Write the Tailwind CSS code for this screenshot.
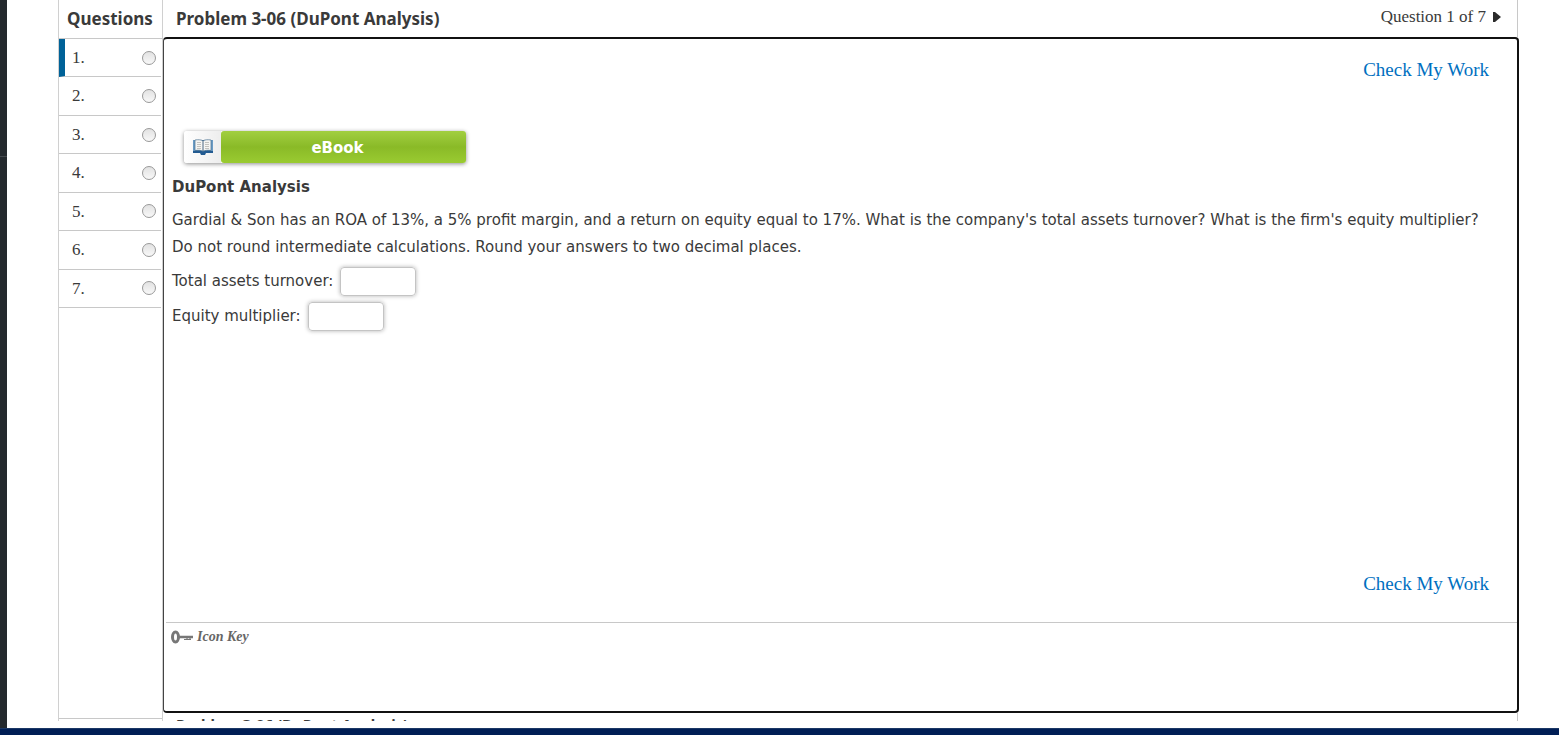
<!DOCTYPE html>
<html lang="en">
<head>
  <meta charset="UTF-8" />
  <meta name="viewport" content="width=device-width, initial-scale=1.0" />
  <title>Problem 3-06 (DuPont Analysis)</title>
  <script src="https://cdn.jsdelivr.net/npm/@tailwindcss/browser@4"></script>
</head>
<body class="flex h-screen flex-col overflow-hidden bg-white font-['Liberation_Serif',serif] text-[#3a3a3a]">
  <div class="flex min-h-0 flex-1">
    <!-- Collapsed side rail -->
    <aside class="w-[7px] bg-[#24292d] pt-[156px]">
      <div class="h-px bg-[#44494d]"></div>
    </aside>

    <main class="flex min-w-0 flex-1 pr-10 pb-[7px] pl-[51px]">
      <!-- Question list -->
      <nav class="flex w-[105px] flex-col border-x border-[#d0d0d0]">
        <h2 class="h-[39px] border-b border-[#c8c8c8] pl-2 font-['Noto_Sans',sans-serif] text-[17px] leading-[38px] font-bold">Questions</h2>
        <ol class="mr-px grid h-[269px] grid-rows-7 text-[17px]">
          <li class="flex items-center justify-between border-b border-l-6 border-b-[#c8c8c8] border-l-[#006298] pr-[5px] pl-[7px]">
            <label for="q1">1.</label>
            <input id="q1" name="question" type="radio" class="size-3.5 appearance-none rounded-full border border-[#999] bg-linear-to-b from-[#e2e2e2] to-[#f8f8f8]" />
          </li>
          <li class="flex items-center justify-between border-b border-[#c8c8c8] pr-[5px] pl-[13px]">
            <label for="q2">2.</label>
            <input id="q2" name="question" type="radio" class="size-3.5 appearance-none rounded-full border border-[#999] bg-linear-to-b from-[#e2e2e2] to-[#f8f8f8]" />
          </li>
          <li class="flex items-center justify-between border-b border-[#c8c8c8] pr-[5px] pl-[13px]">
            <label for="q3">3.</label>
            <input id="q3" name="question" type="radio" class="size-3.5 appearance-none rounded-full border border-[#999] bg-linear-to-b from-[#e2e2e2] to-[#f8f8f8]" />
          </li>
          <li class="flex items-center justify-between border-b border-[#c8c8c8] pr-[5px] pl-[13px]">
            <label for="q4">4.</label>
            <input id="q4" name="question" type="radio" class="size-3.5 appearance-none rounded-full border border-[#999] bg-linear-to-b from-[#e2e2e2] to-[#f8f8f8]" />
          </li>
          <li class="flex items-center justify-between border-b border-[#c8c8c8] pr-[5px] pl-[13px]">
            <label for="q5">5.</label>
            <input id="q5" name="question" type="radio" class="size-3.5 appearance-none rounded-full border border-[#999] bg-linear-to-b from-[#e2e2e2] to-[#f8f8f8]" />
          </li>
          <li class="flex items-center justify-between border-b border-[#c8c8c8] pr-[5px] pl-[13px]">
            <label for="q6">6.</label>
            <input id="q6" name="question" type="radio" class="size-3.5 appearance-none rounded-full border border-[#999] bg-linear-to-b from-[#e2e2e2] to-[#f8f8f8]" />
          </li>
          <li class="flex items-center justify-between border-b border-[#c8c8c8] pr-[5px] pl-[13px]">
            <label for="q7">7.</label>
            <input id="q7" name="question" type="radio" class="size-3.5 appearance-none rounded-full border border-[#999] bg-linear-to-b from-[#e2e2e2] to-[#f8f8f8]" />
          </li>
        </ol>
        <div class="mt-auto mb-0.5 border-b border-[#c8c8c8]"></div>
      </nav>

      <section class="flex min-w-0 flex-1 flex-col">
        <header class="mr-px flex h-[37px] justify-between border-r border-[#c8c8c8] pr-4 pl-[13px]">
          <h1 class="font-['Noto_Sans',sans-serif] text-[17px] leading-[38px] font-bold">Problem 3-06 (DuPont Analysis)</h1>
          <button class="flex items-center gap-[7px] pb-1 text-[17px]">
            Question 1 of 7
            <svg class="h-2.5 w-2" viewBox="0 0 8 10" fill="#2b2b2b"><path d="M0 0h2l6 5-6 5H0z" /></svg>
          </button>
        </header>

        <!-- Problem frame -->
        <div class="flex min-h-0 flex-1 flex-col rounded-[4px] border-2 border-l border-[#111] border-l-[#444]">
          <div class="flex flex-1 flex-col pr-4 pl-2 font-['DejaVu_Sans',sans-serif] text-[15px]">
            <a href="#" class="mt-[19px] mr-3 self-end font-['Liberation_Serif',serif] text-[19px] leading-6 text-[#006fbf]">Check My Work</a>

            <button class="mt-[49px] ml-3 flex h-8 w-[282px] items-stretch rounded-[3px] text-[15px] font-bold text-white shadow-[0_1px_4px_rgba(0,0,0,0.45)]">
              <span class="flex w-[37px] items-center justify-center rounded-l-[3px] bg-linear-to-r from-white to-[#ededed]">
                <svg class="h-[18px] w-[22px]" viewBox="0 0 22 18">
                  <path d="M1 2h20v13h-7l-1 2H9l-1-2H1z" fill="#235b91" />
                  <path d="M1 2h2v11H1zM19 2h2v11h-2z" fill="#6b9cc5" />
                  <path d="M3 2c3-.5 6-.3 8 .7 2-1 5-1.200 8-.7v10.500c-3-.5-6-.3-8 .7-2-1-5-1.200-8-.7z" fill="#f5f5f3" stroke="#47708f" stroke-width=".7" />
                  <path d="M11 2.500V13" stroke="#4a6780" />
                  <path d="M5 4.500h4M5 6.500h4M5 8.500h4M5 10.500h4M13 4.500h4M13 6.500h4M13 8.500h4M13 10.500h4" stroke="#c2c2be" />
                </svg>
              </span>
              <span class="flex flex-1 items-center justify-center rounded-[3px] bg-linear-to-b from-[#a2cf40] via-[#8aba27] to-[#9acb31] pt-0.5 pr-3">eBook</span>
            </button>

            <h3 class="mt-3 leading-6 font-bold">DuPont Analysis</h3>
            <p class="mt-2 leading-[27px]">Gardial &amp; Son has an ROA of 13%, a 5% profit margin, and a return on equity equal to 17%. What is the company's total assets turnover? What is the firm's equity multiplier? Do not round intermediate calculations. Round your answers to two decimal places.</p>
            <div class="mt-1.5 flex items-center gap-[7px]">
              <label for="turnover">Total assets turnover:</label>
              <input id="turnover" type="text" class="h-[29px] w-[76px] rounded-[4px] border border-[#c4c4c4] px-1.5 shadow-[0_0_4px_rgba(0,0,0,0.3)]" />
            </div>
            <div class="mt-1.5 flex items-center gap-[7px]">
              <label for="multiplier">Equity multiplier:</label>
              <input id="multiplier" type="text" class="h-[29px] w-[76px] rounded-[4px] border border-[#c4c4c4] px-1.5 shadow-[0_0_4px_rgba(0,0,0,0.3)]" />
            </div>

            <a href="#" class="mt-auto mr-3 mb-[26px] self-end font-['Liberation_Serif',serif] text-[19px] leading-6 text-[#006fbf]">Check My Work</a>
          </div>

          <footer class="ml-0.5 h-[89px] border-t border-[#c8c8c8] pt-1 pl-[5px]">
            <button class="flex items-center gap-1 text-[14px] leading-5 font-bold text-[#666] italic">
              <svg class="h-[14px] w-[22px]" viewBox="0 0 22 14" fill="none" stroke="#777">
                <ellipse cx="4.500" cy="7" rx="3" ry="5" stroke-width="3" />
                <path d="M8 7h14" stroke-width="2.500" />
                <path d="M13 9.500h7M16 8v2M19 8v2" stroke-width="1.200" />
              </svg>
              Icon Key
            </button>
          </footer>
        </div>

        <!-- Next problem, cut off by the status bar -->
        <div class="mr-px h-2 overflow-hidden border-r border-[#c8c8c8] pl-[13px]">
          <h2 class="font-['Noto_Sans',sans-serif] text-[15px] leading-[22px] font-bold">Problem 3-06 (DuPont Analysis)</h2>
        </div>
      </section>
    </main>
  </div>
  <div class="h-[7px] border-t border-[#1b3765] bg-[#001e55]"></div>
</body>
</html>
